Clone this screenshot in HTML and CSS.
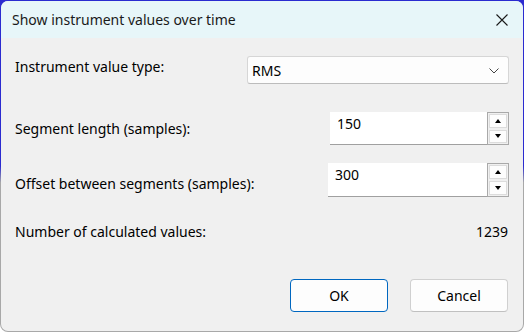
FILE: index.html
```html
<!DOCTYPE html>
<html>
<head>
  <meta charset="utf-8">
  <title>Show instrument values over time</title>
  <link rel="stylesheet" href="styles.css">
</head>
<body>
  <div class="frame">
    <div class="dialog">
      <div class="titlebar">
        <span class="title">Show instrument values over time</span>
        <span class="close">
          <svg width="12" height="12" viewBox="0 0 12 12"><path d="M0.5 0.5 L11.5 11.5 M11.5 0.5 L0.5 11.5" stroke="#1a1a1a" stroke-width="1.1" fill="none"/></svg>
        </span>
      </div>

      <div class="content">
        <div class="row row-type">
          <label class="label">Instrument value type:</label>
          <div class="combo">
            <span class="combo-text">RMS</span>
            <svg class="chevron" width="10" height="6" viewBox="0 0 10 6"><path d="M0.5 0.5 L5 5 L9.5 0.5" stroke="#444" stroke-width="1" fill="none"/></svg>
          </div>
        </div>

        <div class="row row-length">
          <label class="label">Segment length (samples):</label>
          <div class="spin spin-length">
            <span class="spin-text">150</span>
            <div class="spin-buttons">
              <div class="spin-btn"><span class="arrow-up"></span></div>
              <div class="spin-btn"><span class="arrow-down"></span></div>
            </div>
          </div>
        </div>

        <div class="row row-offset">
          <label class="label">Offset between segments (samples):</label>
          <div class="spin spin-offset">
            <span class="spin-text">300</span>
            <div class="spin-buttons">
              <div class="spin-btn"><span class="arrow-up"></span></div>
              <div class="spin-btn"><span class="arrow-down"></span></div>
            </div>
          </div>
        </div>

        <div class="row row-count">
          <span class="label">Number of calculated values:</span>
          <span class="count">1239</span>
        </div>

        <div class="buttons">
          <button type="button" class="btn btn-default">OK</button>
          <button type="button" class="btn">Cancel</button>
        </div>
      </div>
    </div>
  </div>
</body>
</html>
```

FILE: styles.css
```css
html, body {
  margin: 0;
  width: 524px;
  height: 332px;
  overflow: hidden;
}

body {
  background: linear-gradient(#2b2bd0 50%, #ffffff 50%);
  font-family: "Noto Sans", "Open Sans", sans-serif;
  font-size: 14px;
  color: #000;
}

.frame {
  width: 524px;
  height: 332px;
  box-sizing: border-box;
  padding: 1px;
  border-radius: 8px;
  background: linear-gradient(#2b2bd0 50%, #a8a8a8 55%);
}

.dialog {
  height: 100%;
  border-radius: 7px;
  overflow: hidden;
  background: #f0f0f0;
}

.titlebar {
  height: 37px;
  background: #e7f6f9;
  display: flex;
  align-items: center;
  justify-content: space-between;
  padding: 0 15px 0 11px;
}

.title {
  font-size: 14px;
  color: #1a1a1a;
}

.close {
  display: flex;
}

.content {
  padding: 18px 14px 0 14px;
}

.row {
  display: flex;
  justify-content: space-between;
  align-items: flex-start;
}

.label {
  line-height: 18px;
}

.row-type .label {
  padding-top: 2px;
}

.row-length {
  margin-top: 28px;
}

.row-length .label {
  padding-top: 8px;
}

.row-offset {
  margin-top: 18px;
}

.row-offset .label {
  padding-top: 12px;
}

.row-count {
  margin-top: 26px;
  line-height: 18px;
}

.count {
  padding-right: 1px;
}

.combo {
  width: 262px;
  height: 28px;
  box-sizing: border-box;
  background: #fdfdfd;
  border: 1px solid #d6d6d6;
  border-bottom-color: #bcbcbc;
  border-radius: 3px;
  display: flex;
  align-items: center;
  justify-content: space-between;
  padding: 0 9px 0 4px;
}

.chevron {
  margin-top: 1px;
}

.spin {
  display: flex;
  background: #fff;
  box-sizing: border-box;
}

.spin-length {
  width: 179px;
  height: 33px;
}

.spin-offset {
  width: 181px;
  height: 34px;
}

.spin-text {
  flex: 1;
  padding: 3px 0 0 7px;
  line-height: 18px;
  border-bottom: 1px solid #a0a0a0;
}

.spin-buttons {
  width: 22px;
  display: flex;
  flex-direction: column;
  border: 1px solid #a9a9a9;
  box-sizing: border-box;
  background: #f0f0f0;
}

.spin-btn {
  flex: 1;
  display: flex;
  align-items: center;
  justify-content: center;
  margin: 1px;
  background: #fdfdfd;
  border: 1px solid #dcdcdc;
}

.arrow-up, .arrow-down {
  width: 0;
  height: 0;
  border-left: 3.5px solid transparent;
  border-right: 3.5px solid transparent;
}

.arrow-up {
  border-bottom: 4px solid #000;
}

.arrow-down {
  border-top: 4px solid #000;
}

.buttons {
  display: flex;
  justify-content: flex-end;
  gap: 22px;
  margin-top: 38px;
  padding-right: 1px;
}

.btn {
  width: 98px;
  height: 33px;
  box-sizing: border-box;
  font-family: inherit;
  font-size: 14px;
  color: #000;
  background: #fdfdfd;
  border: 1px solid #d0d0d0;
  border-bottom-color: #c0c0c0;
  border-radius: 4px;
  padding: 0 0 1px 0;
}

.btn-default {
  border: 1px solid #0067c0;
}
```
